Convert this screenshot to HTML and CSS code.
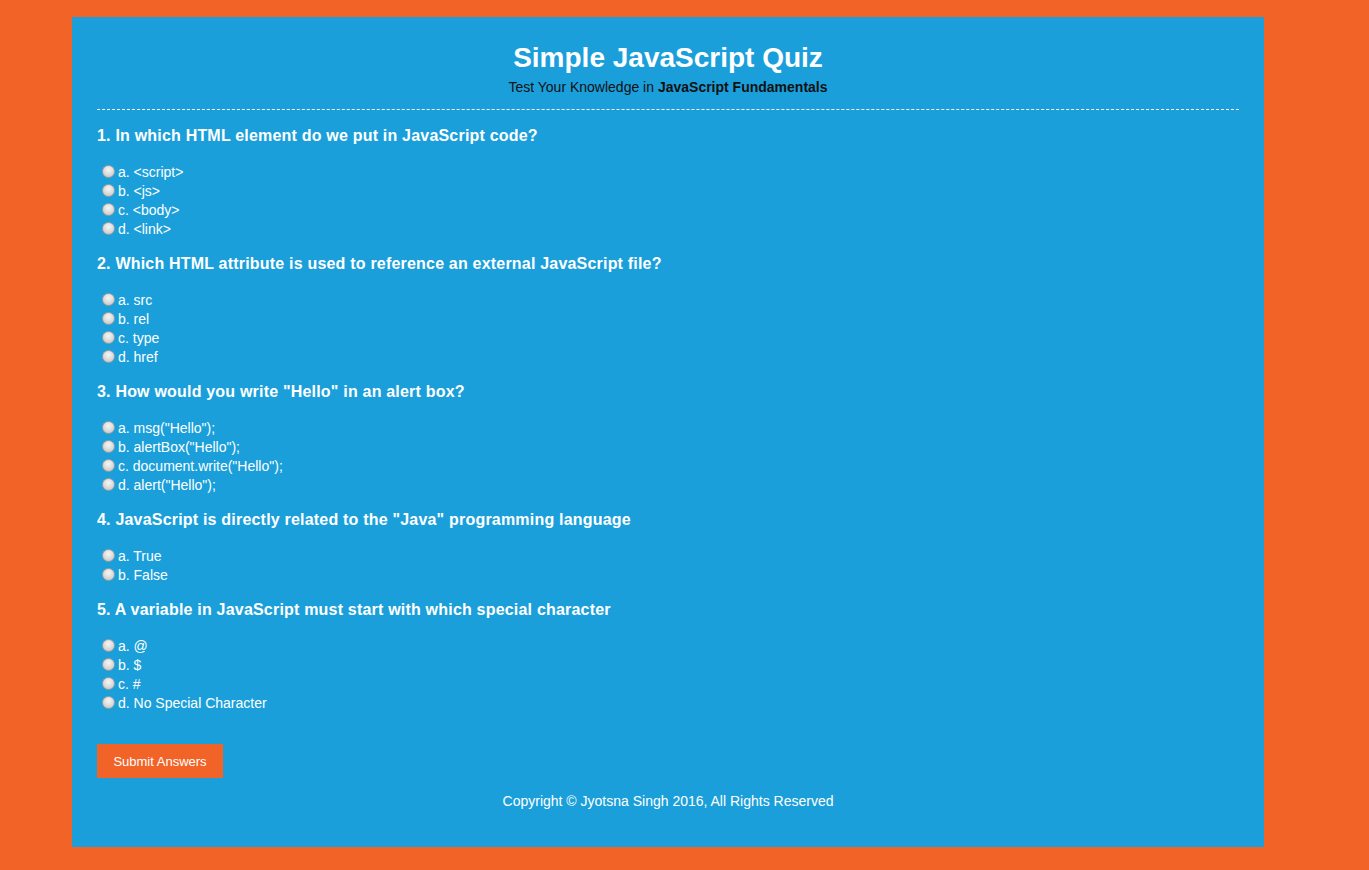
FILE: index.html
```html
<!DOCTYPE html>
<html>
<head>
<meta charset="utf-8">
<link rel="stylesheet" href="styles.css">
</head>
<body>
<div class="wrap">
  <header class="head">
    <h1 class="title">Simple JavaScript Quiz</h1>
    <p class="sub">Test Your Knowledge in <b>JavaScript Fundamentals</b></p>
  </header>
  <form class="quiz">
    <div class="q">
      <h3 class="qt">1. In which HTML element do we put in JavaScript code?</h3>
      <label class="opt"><input type="radio" name="q1"> a. &lt;script&gt;</label>
      <label class="opt"><input type="radio" name="q1"> b. &lt;js&gt;</label>
      <label class="opt"><input type="radio" name="q1"> c. &lt;body&gt;</label>
      <label class="opt"><input type="radio" name="q1"> d. &lt;link&gt;</label>
    </div>
    <div class="q">
      <h3 class="qt">2. Which HTML attribute is used to reference an external JavaScript file?</h3>
      <label class="opt"><input type="radio" name="q2"> a. src</label>
      <label class="opt"><input type="radio" name="q2"> b. rel</label>
      <label class="opt"><input type="radio" name="q2"> c. type</label>
      <label class="opt"><input type="radio" name="q2"> d. href</label>
    </div>
    <div class="q">
      <h3 class="qt">3. How would you write "Hello" in an alert box?</h3>
      <label class="opt"><input type="radio" name="q3"> a. msg("Hello");</label>
      <label class="opt"><input type="radio" name="q3"> b. alertBox("Hello");</label>
      <label class="opt"><input type="radio" name="q3"> c. document.write("Hello");</label>
      <label class="opt"><input type="radio" name="q3"> d. alert("Hello");</label>
    </div>
    <div class="q">
      <h3 class="qt">4. JavaScript is directly related to the "Java" programming language</h3>
      <label class="opt"><input type="radio" name="q4"> a. True</label>
      <label class="opt"><input type="radio" name="q4"> b. False</label>
    </div>
    <div class="q">
      <h3 class="qt">5. A variable in JavaScript must start with which special character</h3>
      <label class="opt"><input type="radio" name="q5"> a. @</label>
      <label class="opt"><input type="radio" name="q5"> b. $</label>
      <label class="opt"><input type="radio" name="q5"> c. #</label>
      <label class="opt"><input type="radio" name="q5"> d. No Special Character</label>
    </div>
    <button type="button" class="submit">Submit Answers</button>
  </form>
  <footer class="foot">Copyright &copy; Jyotsna Singh 2016, All Rights Reserved</footer>
</div>
</body>
</html>
```
FILE: styles.css
```css
html, body {
  margin: 0;
  padding: 0;
  background: #f26327;
  font-family: "Liberation Sans", Arial, sans-serif;
}
body {
  padding: 17px 0 23px 72px;
}
.wrap {
  width: 1192px;
  height: 830px;
  box-sizing: border-box;
  background: #1a9fdb;
  padding: 0 25px;
  color: #fff;
}
.head {
  text-align: center;
  padding-top: 26px;
  padding-bottom: 14px;
  border-bottom: 1px dashed #fff;
}
.title {
  margin: 0;
  font-size: 28px;
  line-height: 30px;
  font-weight: bold;
  color: #fff;
}
.sub {
  margin: 6px 0 0;
  font-size: 14px;
  line-height: 16px;
  color: #111;
}
.quiz {
  padding-top: 17px;
}
.q {
  margin-bottom: 16px;
}
.qt {
  margin: 0 0 18px;
  font-size: 16px;
  line-height: 18px;
  font-weight: bold;
  letter-spacing: 0.2px;
}
.opt {
  display: flex;
  align-items: center;
  font-size: 14px;
  line-height: 19px;
  height: 19px;
}
.opt input {
  appearance: none;
  -webkit-appearance: none;
  width: 13px;
  height: 13px;
  margin: -3px 3px 0 5px;
  border-radius: 50%;
  border: 1px solid #a0a0a0;
  background: radial-gradient(circle at 50% 35%, #f6f6f6 0%, #dadada 55%, #bcbcbc 100%);
  box-sizing: border-box;
}
.submit {
  display: block;
  margin-top: 31px;
  width: 126px;
  height: 34px;
  border: 0;
  background: #f26327;
  color: #fff;
  font-family: "Liberation Sans", Arial, sans-serif;
  font-size: 13px;
  padding: 0;
}
.foot {
  text-align: center;
  font-size: 14px;
  margin-top: 15px;
  line-height: 17px;
}
```
